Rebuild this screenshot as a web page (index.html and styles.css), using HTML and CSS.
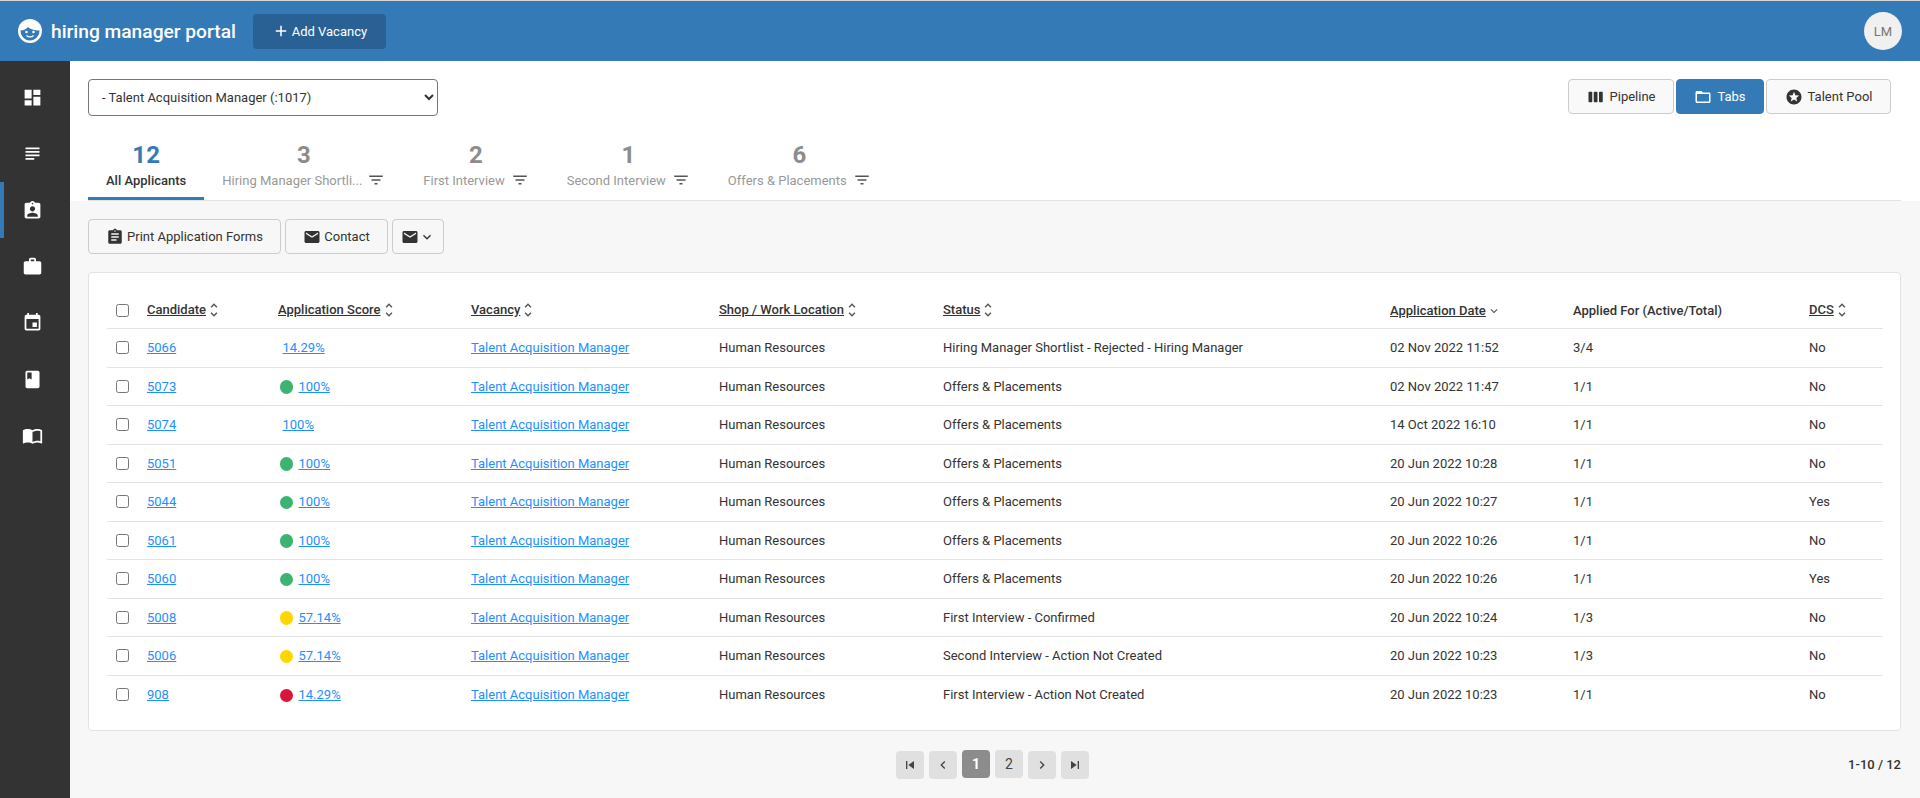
FILE: index.html
```html
<!DOCTYPE html>
<html lang="en">
<head>
    <meta charset="UTF-8">
    <meta name="viewport" content="width=device-width, initial-scale=1.0">
    <title>Hiring Manager Portal</title>
    <link rel="stylesheet" href="styles.css">
</head>
<body>
    <svg class="sprite" aria-hidden="true">
        <symbol id="i-dashboard" viewBox="0 0 24 24"><path d="M3 13h8V3H3v10zm0 8h8v-6H3v6zm10 0h8V11h-8v10zm0-18v6h8V3h-8z"/></symbol>
        <symbol id="i-subject" viewBox="0 0 24 24"><path d="M14 17H4v2h10v-2zm6-8H4v2h16V9zM4 15h16v-2H4v2zM4 5v2h16V5H4z"/></symbol>
        <symbol id="i-assign-ind" viewBox="0 0 24 24"><path d="M19 3h-4.18C14.4 1.84 13.3 1 12 1c-1.3 0-2.4.84-2.82 2H5c-1.1 0-2 .9-2 2v14c0 1.1.9 2 2 2h14c1.1 0 2-.9 2-2V5c0-1.1-.9-2-2-2zm-7 0c.55 0 1 .45 1 1s-.45 1-1 1-1-.45-1-1 .45-1 1-1zm0 4c1.66 0 3 1.34 3 3s-1.34 3-3 3-3-1.34-3-3 1.34-3 3-3zm6 12H6v-1.4c0-2 4-3.1 6-3.1s6 1.1 6 3.1V19z"/></symbol>
        <symbol id="i-work" viewBox="0 0 24 24"><path d="M20 6h-4V4c0-1.11-.89-2-2-2h-4c-1.11 0-2 .89-2 2v2H4c-1.11 0-1.99.89-1.99 2L2 19c0 1.11.89 2 2 2h16c1.11 0 2-.89 2-2V8c0-1.11-.89-2-2-2zm-6 0h-4V4h4v2z"/></symbol>
        <symbol id="i-event" viewBox="0 0 24 24"><path d="M17 12h-5v5h5v-5zM16 1v2H8V1H6v2H5c-1.11 0-1.99.9-1.99 2L3 19c0 1.1.89 2 2 2h14c1.1 0 2-.9 2-2V5c0-1.1-.9-2-2-2h-1V1h-2zm3 18H5V8h14v11z"/></symbol>
        <symbol id="i-book" viewBox="0 0 24 24"><path d="M18 2H6c-1.1 0-2 .9-2 2v16c0 1.1.9 2 2 2h12c1.1 0 2-.9 2-2V4c0-1.1-.9-2-2-2zM6 4h5v8l-2.5-1.5L6 12V4z"/></symbol>
        <symbol id="i-open-book" viewBox="0 0 24 24"><path d="M21 5c-1.11-.35-2.33-.5-3.5-.5-1.95 0-4.05.4-5.5 1.5-1.45-1.1-3.55-1.5-5.5-1.5S2.45 4.9 1 6v14.65c0 .25.25.5.5.5.1 0 .15-.05.25-.05C3.1 20.45 5.05 20 6.5 20c1.95 0 4.05.4 5.5 1.5 1.35-.85 3.8-1.5 5.5-1.5 1.65 0 3.35.3 4.75 1.05.1.05.15.05.25.05.25 0 .5-.25.5-.5V6c-.6-.45-1.25-.75-2-1zm0 13.5c-1.1-.35-2.3-.5-3.5-.5-1.7 0-4.15.65-5.5 1.5V8c1.35-.85 3.8-1.5 5.5-1.5 1.2 0 2.4.15 3.5.5v11.5z"/></symbol>
        <symbol id="i-plus" viewBox="0 0 24 24"><path d="M19 13h-6v6h-2v-6H5v-2h6V5h2v6h6v2z"/></symbol>
        <symbol id="i-week" viewBox="0 0 24 24"><path d="M6 5H3c-.55 0-1 .45-1 1v12c0 .55.45 1 1 1h3c.55 0 1-.45 1-1V6c0-.55-.45-1-1-1zm14 0h-3c-.55 0-1 .45-1 1v12c0 .55.45 1 1 1h3c.55 0 1-.45 1-1V6c0-.55-.45-1-1-1zm-7 0h-3c-.55 0-1 .45-1 1v12c0 .55.45 1 1 1h3c.55 0 1-.45 1-1V6c0-.55-.45-1-1-1z"/></symbol>
        <symbol id="i-folder" viewBox="0 0 24 24"><path d="M20 6h-8l-2-2H4c-1.1 0-1.99.9-1.99 2L2 18c0 1.1.9 2 2 2h16c1.1 0 2-.9 2-2V8c0-1.1-.9-2-2-2zm0 12H4V8h16v10z"/></symbol>
        <symbol id="i-stars" viewBox="0 0 24 24"><path d="M11.99 2C6.47 2 2 6.48 2 12s4.47 10 9.99 10C17.52 22 22 17.52 22 12S17.52 2 11.99 2zm4.24 16L12 15.45 7.77 18l1.12-4.81-3.73-3.23 4.92-.42L12 5l1.92 4.53 4.92.42-3.73 3.23L16.23 18z"/></symbol>
        <symbol id="i-filter" viewBox="0 0 24 24"><path d="M10 18h4v-2h-4v2zM3 6v2h18V6H3zm3 7h12v-2H6v2z"/></symbol>
        <symbol id="i-assignment" viewBox="0 0 24 24"><path d="M19 3h-4.18C14.4 1.84 13.3 1 12 1c-1.3 0-2.4.84-2.82 2H5c-1.1 0-2 .9-2 2v14c0 1.1.9 2 2 2h14c1.1 0 2-.9 2-2V5c0-1.1-.9-2-2-2zm-7 0c.55 0 1 .45 1 1s-.45 1-1 1-1-.45-1-1 .45-1 1-1zm2 14H7v-2h7v2zm3-4H7v-2h10v2zm0-4H7V7h10v2z"/></symbol>
        <symbol id="i-email" viewBox="0 0 24 24"><path d="M20 4H4c-1.1 0-1.99.9-1.99 2L2 18c0 1.1.9 2 2 2h16c1.1 0 2-.9 2-2V6c0-1.1-.9-2-2-2zm0 4l-8 5-8-5V6l8 5 8-5v2z"/></symbol>
        <symbol id="i-first" viewBox="0 0 24 24"><path d="M6 6h2v12H6zm3.500 6l8.500 6V6z"/></symbol>
        <symbol id="i-last" viewBox="0 0 24 24"><path d="M6 18l8.500-6L6 6v12zM16 6v12h2V6h-2z"/></symbol>
        <symbol id="i-prev" viewBox="0 0 24 24"><path d="M15.41 7.41L14 6l-6 6 6 6 1.41-1.41L10.83 12z"/></symbol>
        <symbol id="i-next" viewBox="0 0 24 24"><path d="M10 6L8.59 7.41 13.17 12l-4.58 4.59L10 18l6-6z"/></symbol>
        <symbol id="i-sort" viewBox="0 0 24 24"><path d="M12 5.83L15.17 9l1.41-1.41L12 3 7.41 7.59 8.83 9 12 5.83zm0 12.34L8.83 15l-1.41 1.41L12 21l4.59-4.59L15.17 15 12 18.17z"/></symbol>
        <symbol id="i-down" viewBox="0 0 24 24"><path d="M16.59 8.59L12 13.17 7.41 8.59 6 10l6 6 6-6z"/></symbol>
    </svg>

    <header class="topbar">
        <div class="brand">
            <svg class="brand-logo" viewBox="0 0 24 24">
                <circle cx="12" cy="12" r="12" fill="#fff"/>
                <path d="M2.500 11.500c2.800 0 5.500-1 7.500-3.500 2 2 6.500 3.500 11.500 3.500 0 5.500-4.200 10-9.500 10s-9.500-4.500-9.500-10z" fill="#337ab7"/>
                <circle cx="8.500" cy="13" r="1.300" fill="#fff"/>
                <circle cx="15.500" cy="13" r="1.300" fill="#fff"/>
                <path d="M8.500 16.500c1.800 1.800 5.200 1.800 7 0" fill="none" stroke="#fff" stroke-width="1.200"/>
            </svg>
            <span class="brand-name">hiring manager portal</span>
        </div>
        <button class="add-vacancy"><svg class="icon-18"><use href="#i-plus"/></svg>Add Vacancy</button>
        <div class="avatar">LM</div>
    </header>

    <div class="layout">
        <nav class="sidebar">
            <a class="side-item"><svg class="side-icon"><use href="#i-dashboard"/></svg></a>
            <a class="side-item"><svg class="side-icon"><use href="#i-subject"/></svg></a>
            <a class="side-item active"><svg class="side-icon"><use href="#i-assign-ind"/></svg></a>
            <a class="side-item"><svg class="side-icon"><use href="#i-work"/></svg></a>
            <a class="side-item"><svg class="side-icon"><use href="#i-event"/></svg></a>
            <a class="side-item"><svg class="side-icon"><use href="#i-book"/></svg></a>
            <a class="side-item"><svg class="side-icon"><use href="#i-open-book"/></svg></a>
        </nav>

        <main class="content">
            <section class="top-panel">
                <div class="controls">
                    <select class="vacancy-select">
                        <option>- Talent Acquisition Manager (:1017)</option>
                    </select>
                    <div class="view-switch">
                        <button class="btn btn-pipeline"><svg class="icon-18"><use href="#i-week"/></svg>Pipeline</button>
                        <button class="btn btn-primary"><svg class="icon-18"><use href="#i-folder"/></svg>Tabs</button>
                        <button class="btn btn-pool"><svg class="icon-18"><use href="#i-stars"/></svg>Talent Pool</button>
                    </div>
                </div>
                <div class="tabs">
                    <div class="tab tab-all active">
                        <span class="tab-count">12</span>
                        <span class="tab-label">All Applicants</span>
                    </div>
                    <div class="tab">
                        <span class="tab-count">3</span>
                        <span class="tab-label"><span class="tab-text-cut">Hiring Manager Shortli...</span><svg class="icon-18"><use href="#i-filter"/></svg></span>
                    </div>
                    <div class="tab">
                        <span class="tab-count">2</span>
                        <span class="tab-label"><span>First Interview</span><svg class="icon-18"><use href="#i-filter"/></svg></span>
                    </div>
                    <div class="tab">
                        <span class="tab-count">1</span>
                        <span class="tab-label"><span>Second Interview</span><svg class="icon-18"><use href="#i-filter"/></svg></span>
                    </div>
                    <div class="tab">
                        <span class="tab-count">6</span>
                        <span class="tab-label"><span>Offers &amp; Placements</span><svg class="icon-18"><use href="#i-filter"/></svg></span>
                    </div>
                </div>
            </section>

            <section class="lower-panel">
                <div class="actions">
                    <button class="btn btn-action btn-print"><svg class="icon-18"><use href="#i-assignment"/></svg>Print Application Forms</button>
                    <button class="btn btn-action btn-contact"><svg class="icon-18"><use href="#i-email"/></svg>Contact</button>
                    <button class="btn btn-action btn-menu"><svg class="icon-18"><use href="#i-email"/></svg><svg class="icon-16"><use href="#i-down"/></svg></button>
                </div>

                <div class="card">
                    <table class="applicants">
                        <colgroup>
                            <col class="col-check"><col class="col-candidate"><col class="col-score"><col class="col-vacancy"><col class="col-shop"><col class="col-status"><col class="col-date"><col class="col-applied"><col class="col-dcs">
                        </colgroup>
                        <thead>
                            <tr>
                                <th><input type="checkbox"></th>
                                <th><u>Candidate</u><svg class="sort"><use href="#i-sort"/></svg></th>
                                <th><u>Application Score</u><svg class="sort"><use href="#i-sort"/></svg></th>
                                <th><u>Vacancy</u><svg class="sort"><use href="#i-sort"/></svg></th>
                                <th><u>Shop / Work Location</u><svg class="sort"><use href="#i-sort"/></svg></th>
                                <th><u>Status</u><svg class="sort"><use href="#i-sort"/></svg></th>
                                <th><u>Application Date</u><svg class="sort sort-down"><use href="#i-down"/></svg></th>
                                <th>Applied For (Active/Total)</th>
                                <th><u>DCS</u><svg class="sort"><use href="#i-sort"/></svg></th>
                            </tr>
                        </thead>
                        <tbody>
                            <tr>
                                <td><input type="checkbox"></td>
                                <td><a href="#">5066</a></td>
                                <td class="no-dot"><a href="#">14.29%</a></td>
                                <td><a href="#">Talent Acquisition Manager</a></td>
                                <td>Human Resources</td>
                                <td>Hiring Manager Shortlist - Rejected - Hiring Manager</td>
                                <td>02 Nov 2022 11:52</td>
                                <td>3/4</td>
                                <td>No</td>
                            </tr>
                            <tr>
                                <td><input type="checkbox"></td>
                                <td><a href="#">5073</a></td>
                                <td><span class="dot green"></span><a href="#">100%</a></td>
                                <td><a href="#">Talent Acquisition Manager</a></td>
                                <td>Human Resources</td>
                                <td>Offers &amp; Placements</td>
                                <td>02 Nov 2022 11:47</td>
                                <td>1/1</td>
                                <td>No</td>
                            </tr>
                            <tr>
                                <td><input type="checkbox"></td>
                                <td><a href="#">5074</a></td>
                                <td class="no-dot"><a href="#">100%</a></td>
                                <td><a href="#">Talent Acquisition Manager</a></td>
                                <td>Human Resources</td>
                                <td>Offers &amp; Placements</td>
                                <td>14 Oct 2022 16:10</td>
                                <td>1/1</td>
                                <td>No</td>
                            </tr>
                            <tr>
                                <td><input type="checkbox"></td>
                                <td><a href="#">5051</a></td>
                                <td><span class="dot green"></span><a href="#">100%</a></td>
                                <td><a href="#">Talent Acquisition Manager</a></td>
                                <td>Human Resources</td>
                                <td>Offers &amp; Placements</td>
                                <td>20 Jun 2022 10:28</td>
                                <td>1/1</td>
                                <td>No</td>
                            </tr>
                            <tr>
                                <td><input type="checkbox"></td>
                                <td><a href="#">5044</a></td>
                                <td><span class="dot green"></span><a href="#">100%</a></td>
                                <td><a href="#">Talent Acquisition Manager</a></td>
                                <td>Human Resources</td>
                                <td>Offers &amp; Placements</td>
                                <td>20 Jun 2022 10:27</td>
                                <td>1/1</td>
                                <td>Yes</td>
                            </tr>
                            <tr>
                                <td><input type="checkbox"></td>
                                <td><a href="#">5061</a></td>
                                <td><span class="dot green"></span><a href="#">100%</a></td>
                                <td><a href="#">Talent Acquisition Manager</a></td>
                                <td>Human Resources</td>
                                <td>Offers &amp; Placements</td>
                                <td>20 Jun 2022 10:26</td>
                                <td>1/1</td>
                                <td>No</td>
                            </tr>
                            <tr>
                                <td><input type="checkbox"></td>
                                <td><a href="#">5060</a></td>
                                <td><span class="dot green"></span><a href="#">100%</a></td>
                                <td><a href="#">Talent Acquisition Manager</a></td>
                                <td>Human Resources</td>
                                <td>Offers &amp; Placements</td>
                                <td>20 Jun 2022 10:26</td>
                                <td>1/1</td>
                                <td>Yes</td>
                            </tr>
                            <tr>
                                <td><input type="checkbox"></td>
                                <td><a href="#">5008</a></td>
                                <td><span class="dot yellow"></span><a href="#">57.14%</a></td>
                                <td><a href="#">Talent Acquisition Manager</a></td>
                                <td>Human Resources</td>
                                <td>First Interview - Confirmed</td>
                                <td>20 Jun 2022 10:24</td>
                                <td>1/3</td>
                                <td>No</td>
                            </tr>
                            <tr>
                                <td><input type="checkbox"></td>
                                <td><a href="#">5006</a></td>
                                <td><span class="dot yellow"></span><a href="#">57.14%</a></td>
                                <td><a href="#">Talent Acquisition Manager</a></td>
                                <td>Human Resources</td>
                                <td>Second Interview - Action Not Created</td>
                                <td>20 Jun 2022 10:23</td>
                                <td>1/3</td>
                                <td>No</td>
                            </tr>
                            <tr>
                                <td><input type="checkbox"></td>
                                <td><a href="#">908</a></td>
                                <td><span class="dot red"></span><a href="#">14.29%</a></td>
                                <td><a href="#">Talent Acquisition Manager</a></td>
                                <td>Human Resources</td>
                                <td>First Interview - Action Not Created</td>
                                <td>20 Jun 2022 10:23</td>
                                <td>1/1</td>
                                <td>No</td>
                            </tr>
                        </tbody>
                    </table>
                </div>

                <div class="pager-row">
                    <div class="pager">
                        <button class="page-btn"><svg class="icon-16"><use href="#i-first"/></svg></button>
                        <button class="page-btn"><svg class="icon-16"><use href="#i-prev"/></svg></button>
                        <button class="page-btn page-num current">1</button>
                        <button class="page-btn page-num">2</button>
                        <button class="page-btn"><svg class="icon-16"><use href="#i-next"/></svg></button>
                        <button class="page-btn"><svg class="icon-16"><use href="#i-last"/></svg></button>
                    </div>
                    <div class="page-count">1-10 / 12</div>
                </div>
            </section>
        </main>
    </div>
</body>
</html>
```

FILE: styles.css
```css
* {
    box-sizing: border-box;
}

html, body {
    height: 100%;
}

body {
    margin: 0;
    display: flex;
    flex-direction: column;
    overflow: hidden;
    border-top: 1px solid #d5d8da;
    font-family: Roboto, "Liberation Sans", sans-serif;
    font-size: 13px;
    color: #333;
    background-color: #f7f7f7;
}

button, select {
    font-family: inherit;
    font-size: 13px;
}

svg {
    fill: currentColor;
    flex: none;
}

.sprite {
    display: none;
}

.icon-18 {
    width: 18px;
    height: 18px;
}

.icon-16 {
    width: 16px;
    height: 16px;
}

/* top bar */
.topbar {
    height: 60px;
    flex: none;
    display: flex;
    align-items: center;
    padding: 0 18px;
    background-color: #337ab7;
    color: #fff;
}

.brand {
    display: flex;
    align-items: center;
    gap: 9px;
}

.brand-logo {
    width: 24px;
    height: 24px;
}

.brand-name {
    font-size: 19.2px;
    font-weight: 500;
}

.add-vacancy {
    display: flex;
    align-items: center;
    justify-content: center;
    gap: 2px;
    width: 133px;
    height: 35px;
    margin-left: 17px;
    border: none;
    border-radius: 4px;
    background-color: #2a6195;
    color: #fff;
}

.avatar {
    width: 38px;
    height: 38px;
    margin-left: auto;
    border-radius: 50%;
    display: flex;
    align-items: center;
    justify-content: center;
    background-color: #f0f0f0;
    color: #777;
    font-size: 13px;
}

/* sidebar */
.layout {
    flex: 1;
    display: flex;
    min-height: 0;
}

.sidebar {
    width: 70px;
    flex: none;
    padding-top: 8.500px;
    background-color: #333;
    color: #fff;
}

.side-item {
    height: 56.300px;
    display: flex;
    align-items: center;
    justify-content: center;
    padding-right: 6px;
}

.side-item.active {
    box-shadow: inset 4px 0 0 #337ab7;
}

.side-icon {
    width: 21px;
    height: 21px;
}

/* page content */
.content {
    flex: 1;
    min-width: 0;
}

.top-panel {
    height: 140px;
    padding: 18px 19px 0 18px;
    background-color: #fff;
}

.controls {
    display: flex;
    justify-content: space-between;
    align-items: flex-start;
    padding-right: 10px;
}

.vacancy-select {
    width: 350px;
    height: 37px;
    padding-left: 9px;
    border: 1px solid #767676;
    border-radius: 4px;
    background-color: #fff;
    color: #333;
}

.view-switch {
    display: flex;
    gap: 2px;
}

.btn {
    display: inline-flex;
    align-items: center;
    justify-content: center;
    gap: 5px;
    height: 35px;
    padding: 0 17px;
    border: 1px solid #ccc;
    border-radius: 4px;
    background-color: #f9f9f9;
    color: #333;
}

.btn-pipeline { width: 106px; }
.btn-pool { width: 125px; }

.btn-primary {
    width: 88px;
    border-color: #337ab7;
    background-color: #337ab7;
    color: #fff;
}

/* tabs */
.tabs {
    display: flex;
    height: 62px;
    margin-top: 23px;
    border-bottom: 1px solid #e3e3e3;
}

.tab {
    height: 61px;
    padding: 0 20px 0 18px;
    display: flex;
    flex-direction: column;
    align-items: center;
    border-bottom: 3px solid transparent;
    color: #999;
}

.tab-all {
    padding: 0 18px;
}

.tab.active {
    border-bottom-color: #337ab7;
    color: #333;
}

.tab-count {
    margin-top: 2px;
    font-size: 24px;
    font-weight: 700;
    line-height: 28px;
    color: #8c8c8c;
}

.tab.active .tab-count {
    color: #337ab7;
}

.tab-label {
    display: flex;
    align-items: center;
    gap: 6px;
    height: 20px;
    margin-top: 1px;
    white-space: nowrap;
}

.tab-text-cut {
    width: 139px;
}

.tab-label .icon-18 {
    color: #555;
}

.tab.active .tab-label {
    font-weight: 500;
}

/* actions and table */
.lower-panel {
    padding: 18px 19px 0 18px;
}

.actions {
    display: flex;
    gap: 4px;
}

.btn-action {
    gap: 3px;
    background-color: #f7f7f7;
}

.btn-print {
    width: 193px;
    padding: 0;
}

.btn-contact {
    width: 103px;
    padding: 0;
}

.btn-menu {
    padding: 0 8px;
    gap: 0;
}

.card {
    height: 459px;
    margin-top: 18px;
    padding: 16px 17px 0 18px;
    border: 1px solid #e3e3e3;
    border-radius: 4px;
    background-color: #fff;
}

.applicants {
    width: 1776px;
    table-layout: fixed;
    border-collapse: separate;
    border-spacing: 0;
}

.col-check { width: 40px; }
.col-candidate { width: 131px; }
.col-score { width: 193px; }
.col-vacancy { width: 248px; }
.col-shop { width: 224px; }
.col-status { width: 447px; }
.col-date { width: 183px; }
.col-applied { width: 236px; }
.col-dcs { width: 74px; }

.applicants th {
    height: 40px;
    padding: 3px 0 0;
    text-align: left;
    font-weight: 500;
    white-space: nowrap;
    border-bottom: 1px solid #e3e3e3;
}

.applicants th:first-child,
.applicants td:first-child {
    padding-left: 9px;
}

.applicants td {
    height: 38.500px;
    padding: 0;
    white-space: nowrap;
    border-bottom: 1px solid #e3e3e3;
}

.applicants tbody tr:last-child td {
    border-bottom: none;
}

.applicants input {
    display: block;
    margin: 0;
}

.applicants a {
    color: #1e90ff;
}

td.no-dot {
    padding-left: 4.500px;
}

.sort {
    width: 18px;
    height: 18px;
    margin-left: -1px;
    color: #555;
    vertical-align: -5px;
}

.sort-down {
    width: 14px;
    height: 14px;
    margin-left: 1px;
    vertical-align: -3px;
}

.dot {
    display: inline-block;
    width: 13.500px;
    height: 13.500px;
    margin-left: 1.750px;
    margin-right: 5.250px;
    border-radius: 50%;
    vertical-align: -3px;
}

.dot.green { background-color: #3cb371; }
.dot.yellow { background-color: #ffd700; }
.dot.red { background-color: #dc143c; }

/* pagination */
.pager-row {
    display: grid;
    grid-template-columns: 808px auto 1fr;
    align-items: center;
    margin-top: 19px;
}

.pager {
    grid-column: 2;
    display: flex;
    align-items: flex-start;
    gap: 5px;
}

.page-btn {
    width: 28px;
    height: 28px;
    margin-top: 1px;
    padding: 0;
    display: flex;
    align-items: center;
    justify-content: center;
    border: none;
    border-radius: 4px;
    background-color: #e0e0e0;
    color: #444;
    font-size: 14px;
}

.page-num {
    margin-top: 0;
}

.current {
    background-color: #8c8c8c;
    color: #fff;
    font-weight: 700;
}

.page-count {
    justify-self: end;
    font-weight: 500;
}
```
